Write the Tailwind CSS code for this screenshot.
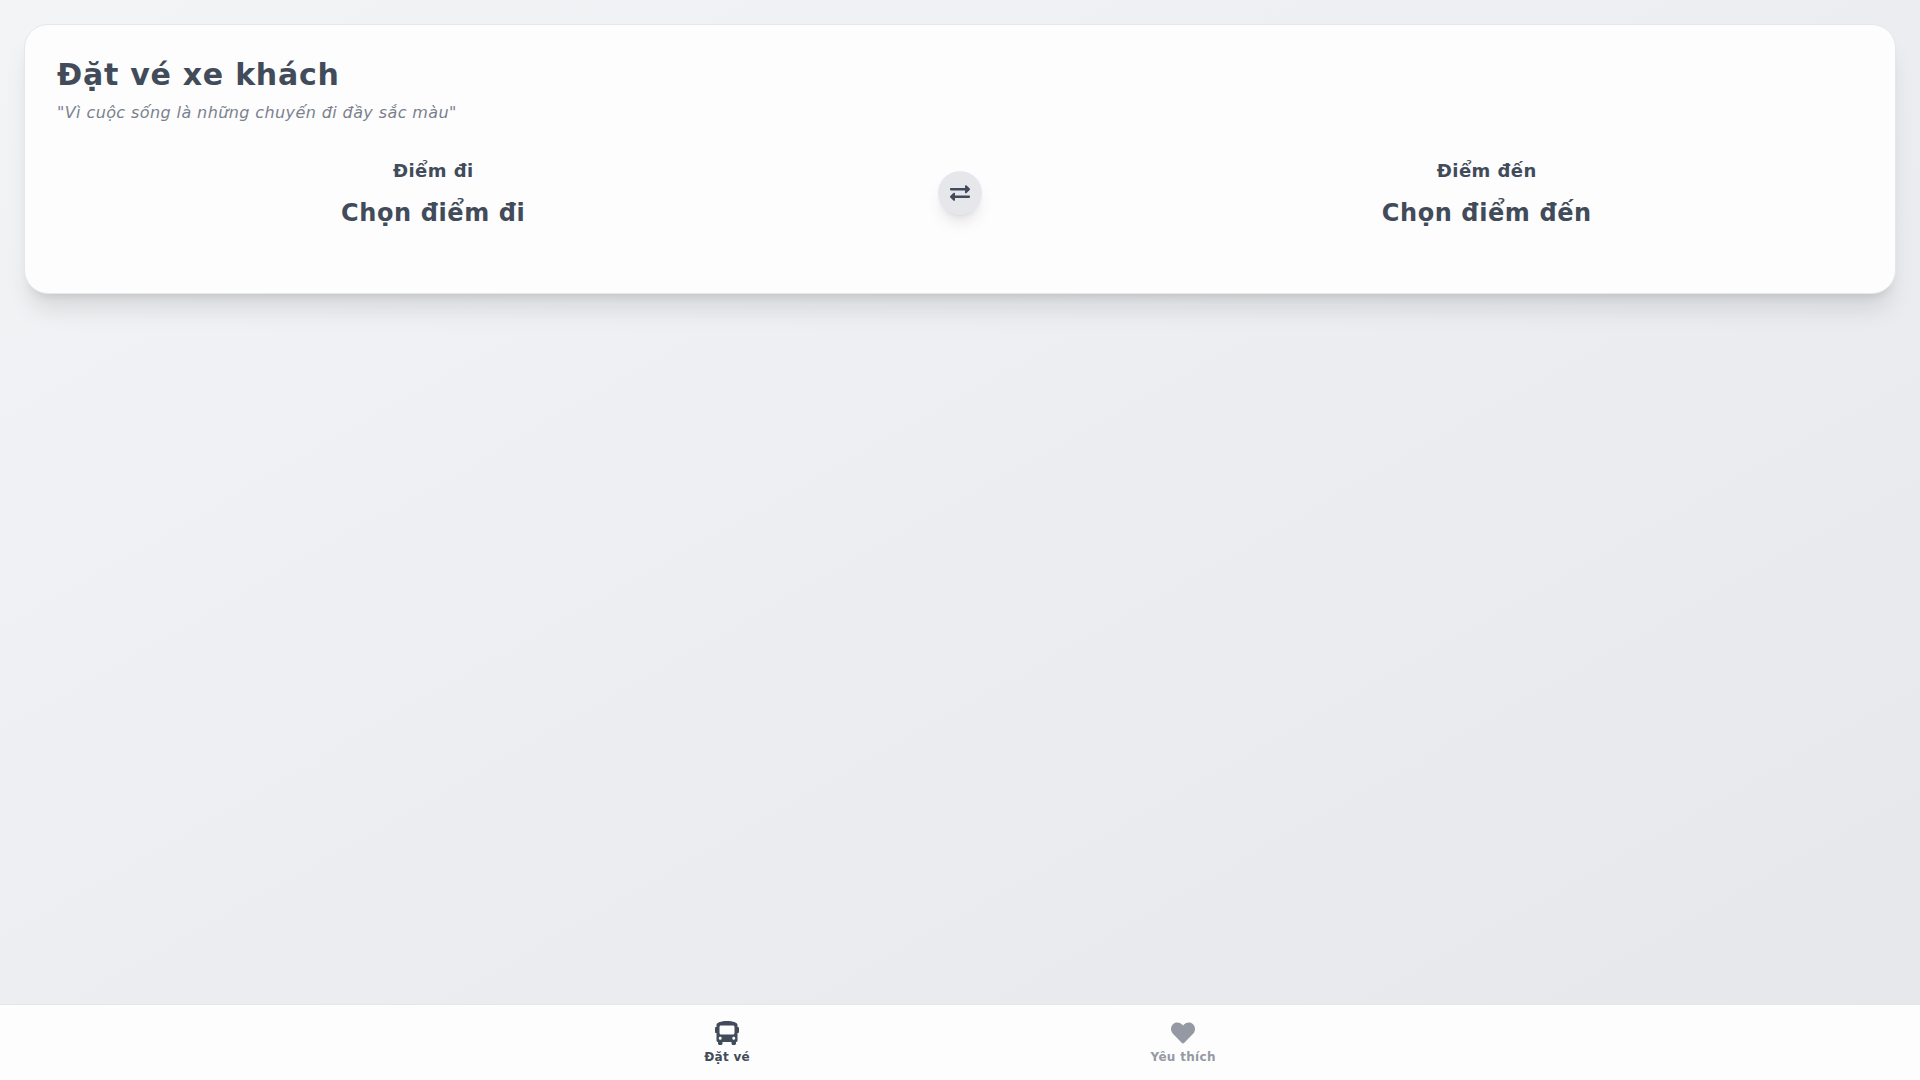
<!DOCTYPE html>
<html lang="vi">
<head>
  <meta charset="UTF-8" />
  <meta name="viewport" content="width=device-width, initial-scale=1.0" />
  <title>Đặt vé xe khách</title>
  <script src="https://cdn.jsdelivr.net/npm/@tailwindcss/browser@4"></script>
</head>
<body class="flex min-h-screen flex-col bg-linear-to-br from-[#f3f4f6] to-[#e5e7eb] font-['DejaVu_Sans',sans-serif] text-[#414b5a]">

  <main class="flex-1 p-6">
    <section class="rounded-3xl border border-[#e5e7eb] bg-[#fdfdfd] p-8 shadow-xl">
      <h1 class="text-3xl font-bold tracking-wide">Đặt vé xe khách</h1>
      <p class="mt-2 text-base tracking-wide italic text-[#7b818d]">"Vì cuộc sống là những chuyến đi đầy sắc màu"</p>

      <div class="my-8 grid grid-cols-12 items-center text-center">
        <div class="col-span-5">
          <h2 class="text-lg font-semibold tracking-wide">Điểm đi</h2>
          <button type="button" class="mt-3 block w-full cursor-pointer text-2xl font-bold tracking-wide">Chọn điểm đi</button>
        </div>

        <div class="col-span-2 flex justify-center">
          <button type="button" aria-label="Đổi chiều" class="cursor-pointer rounded-full bg-[#e5e7eb] p-3 shadow-lg">
            <!-- Swap icon -->
            <svg class="h-5 w-5" fill="currentColor" viewBox="0 0 512 512" xmlns="http://www.w3.org/2000/svg">
              <path d="M0 168v-16c0-13.255 10.745-24 24-24h360V80c0-21.367 25.899-32.042 40.971-16.971l80 80c9.372 9.373 9.372 24.569 0 33.941l-80 80C409.956 271.982 384 261.456 384 240v-48H24c-13.255 0-24-10.745-24-24zm488 152H128v-48c0-21.314-25.862-32.08-40.971-16.971l-80 80c-9.372 9.373-9.372 24.569 0 33.941l80 80C102.057 463.997 128 453.437 128 432v-48h360c13.255 0 24-10.745 24-24v-16c0-13.255-10.745-24-24-24z"></path>
            </svg>
          </button>
        </div>

        <div class="col-span-5">
          <h2 class="text-lg font-semibold tracking-wide">Điểm đến</h2>
          <button type="button" class="mt-3 block w-full cursor-pointer text-2xl font-bold tracking-wide">Chọn điểm đến</button>
        </div>
      </div>
    </section>
  </main>

  <nav class="sticky bottom-0 border-t border-[#e5e7eb] bg-[#fdfdfd]">
    <div class="mx-auto flex max-w-[912px] justify-around pt-4 pb-[15px] text-xs font-semibold tracking-wide">
      <a href="#" class="flex flex-col items-center gap-1">
        <!-- Bus icon -->
        <svg class="h-6 w-6" fill="currentColor" viewBox="0 0 512 512" xmlns="http://www.w3.org/2000/svg">
          <path d="M488 128h-8V80c0-44.8-99.2-80-224-80S32 35.2 32 80v48h-8c-13.25 0-24 10.74-24 24v80c0 13.25 10.75 24 24 24h8v160c0 17.67 14.33 32 32 32v32c0 17.67 14.33 32 32 32h32c17.67 0 32-14.33 32-32v-32h192v32c0 17.67 14.33 32 32 32h32c17.67 0 32-14.33 32-32v-32h6.4c16 0 25.6-12.8 25.6-25.6V256h8c13.25 0 24-10.75 24-24v-80c0-13.26-10.75-24-24-24zM112 400c-17.67 0-32-14.33-32-32s14.33-32 32-32 32 14.33 32 32-14.33 32-32 32zm16-112c-17.67 0-32-14.33-32-32V128c0-17.67 14.33-32 32-32h256c17.67 0 32 14.33 32 32v128c0 17.67-14.33 32-32 32H128zm272 112c-17.67 0-32-14.33-32-32s14.33-32 32-32 32 14.33 32 32-14.33 32-32 32z"></path>
        </svg>
        <span>Đặt vé</span>
      </a>
      <a href="#" class="flex flex-col items-center gap-1 text-[#9599a4]">
        <!-- Heart icon -->
        <svg class="h-6 w-6" fill="currentColor" viewBox="0 0 512 512" xmlns="http://www.w3.org/2000/svg">
          <path d="M462.3 62.6C407.5 15.9 326 24.3 275.7 76.2L256 96.5l-19.7-20.3C186.1 24.3 104.5 15.9 49.7 62.6c-62.8 53.6-66.1 149.8-9.9 207.9l193.5 199.8c12.5 12.9 32.8 12.9 45.3 0l193.5-199.8c56.3-58.1 53-154.3-9.8-207.9z"></path>
        </svg>
        <span>Yêu thích</span>
      </a>
    </div>
  </nav>

</body>
</html>
